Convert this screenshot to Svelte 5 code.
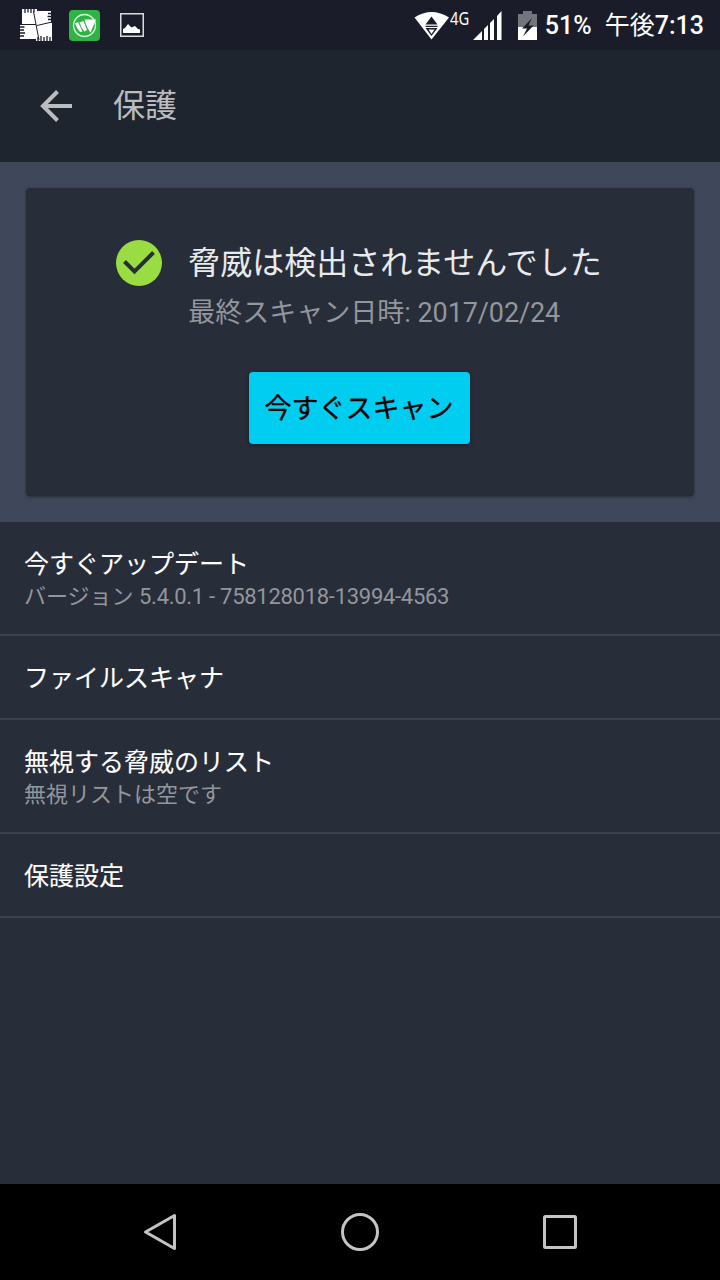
<script>
  const items = [
    { title: '今すぐアップデート', sub: 'バージョン', version: '5.4.0.1 - 758128018-13994-4563' },
    { title: 'ファイルスキャナ' },
    { title: '無視する脅威のリスト', sub: '無視リストは空です' },
    { title: '保護設定' }
  ];
</script>

<div class="screen" lang="ja">
  <div class="statusbar">
    <div class="notifications">
      <svg width="32" height="32" viewBox="0 0 32 32">
        <path fill="#fff" d="M2 0h15v2h14v12h1v18H16v-2H0V15h2z" />
        <path fill="none" stroke="#1a1d29" stroke-width="1.300" d="M5 0v4M8 0v3.500M11 0v4M14 0v3.500M31.500 4.500H28M31.500 7.500h-4M31.500 10.500H28M0 18h4.500M0 21h4M0 24h5M0 27h4M18 32v-4M21 32v-5M24 32v-4M27 32v-5M30 32v-4" />
        <path fill="none" stroke="#1a1d29" d="M13.500 2.500L19 31M0 15.500h16M17 16.500l15-3.500" />
      </svg>
      <svg width="31" height="31" viewBox="0 0 31 31">
        <rect width="31" height="31" rx="4" fill="#2eb344" />
        <circle cx="15.500" cy="15.500" r="11" fill="none" stroke="#d8f1db" stroke-width="1.300" />
        <path fill="#fff" d="M6 13.500l3-1.500 4.500 9.500-2.500.5q-3-3-5-8.500zM10.500 12.500l4-1.500 3.500 9-2.500 1.500q-3-3-5-9zM15.500 9.500H27l-5.500 13q-4-5-6-13z" />
      </svg>
      <svg width="24" height="24" viewBox="0 0 24 24">
        <rect x=".75" y=".75" width="22.500" height="22.500" fill="none" stroke="#d8dcdc" stroke-width="1.500" />
        <path fill="#fff" d="M3 20v-4l2-1 3-4 3.500 3.500L15 13l3 3 2 .5V20z" />
      </svg>
    </div>
    <div class="system">
      <svg width="36" height="29" viewBox="0 0 36 29">
        <path fill="#fff" d="M.5 6.500Q17.500-4.500 35 6.500L17.500 28.500z" />
        <path fill="#1a1d29" d="M17.500 5.500l6 8h-12zM11.500 14.700h12v1.200h-12zM11.500 17h12l-6 8z" />
        <path fill="#fff" d="M14.500 18.500h6l-3 4.500z" />
      </svg>
      <span class="net">4G</span>
      <svg width="29" height="29" viewBox="0 0 29 29">
        <path fill="#fff" d="M0 29l9-9v9zM11 29V18l4-4v15zM17 29V12l4-4v21zM24 29V5l4.500-5v29z" />
      </svg>
      <svg class="battery" width="19" height="29" viewBox="0 0 19 29">
        <path fill="#73767c" d="M5 0h9v3h5v13H0V3h5z" />
        <path fill="#fff" d="M0 16h19v13H0z" />
        <path fill="#1a1d29" d="M14 7L4 17.500h5L5 25.500l10.500-11h-5z" />
      </svg>
      <span class="pct">51%</span>
      <span class="clock"><span class="ampm">午後</span>7:13</span>
    </div>
  </div>

  <header>
    <svg width="32" height="32" viewBox="0 0 32 32">
      <path fill="none" stroke="#bbbcbf" stroke-width="4" d="M32 16H4M17.500 1.500L3 16l14.500 14.500" />
    </svg>
    <h1>保護</h1>
  </header>

  <section class="hero">
    <div class="card">
      <div class="result">
        <svg width="46" height="46" viewBox="0 0 46 46">
          <circle cx="23" cy="23" r="23" fill="#9add43" />
          <path fill="none" stroke="#282d3a" stroke-width="4" d="M8.500 21.500L18.500 31.500L37.500 12.500" />
        </svg>
        <div>
          <h2>脅威は検出されませんでした</h2>
          <p>最終スキャン日時: <span class="date">2017/02/24</span></p>
        </div>
      </div>
      <button>今すぐスキャン</button>
    </div>
  </section>

  <ul>
    {#each items as item}
      <li class:double={item.sub}>
        <div class="title">{item.title}</div>
        {#if item.sub}
          <div class="sub">{item.sub} <span class="version">{item.version ?? ''}</span></div>
        {/if}
      </li>
    {/each}
  </ul>

  <nav>
    <svg width="40" height="40" viewBox="0 0 40 40">
      <path d="M34.500 3.500v33L5.500 20z" />
    </svg>
    <svg width="40" height="40" viewBox="0 0 40 40">
      <circle cx="20" cy="20" r="17.500" />
    </svg>
    <svg width="40" height="40" viewBox="0 0 40 40">
      <rect x="4.500" y="4.500" width="31" height="31" rx="1" />
    </svg>
  </nav>
</div>

<style>
  :global(body) {
    margin: 0;
    background: #282d3a;
  }
  .screen {
    width: 720px;
    height: 1280px;
    display: flex;
    flex-direction: column;
    background: #282d3a;
    font-family: Roboto, "Noto Sans CJK JP", sans-serif;
    overflow: hidden;
  }
  svg {
    display: block;
    flex-shrink: 0;
  }
  h1, h2, p, ul {
    margin: 0;
    padding: 0;
    font-weight: 400;
    white-space: nowrap;
  }
  .statusbar {
    height: 50px;
    box-sizing: border-box;
    padding: 0 16px 0 20px;
    display: flex;
    justify-content: space-between;
    align-items: center;
    background: #1a1d29;
    color: #fff;
  }
  .notifications {
    display: flex;
    align-items: center;
    gap: 17px;
  }
  .notifications svg:last-child {
    margin-left: 3px;
  }
  .system {
    display: flex;
    align-items: center;
    height: 50px;
    line-height: 50px;
    white-space: nowrap;
  }
  .net {
    width: 23px;
    font-family: "Noto Sans", sans-serif;
    font-size: 18px;
    line-height: 20px;
    margin-bottom: 14px;
    transform: scaleX(0.82);
    transform-origin: left;
  }
  .battery {
    margin: 0 8px 0 16px;
  }
  .pct {
    width: 60px;
    padding-top: 2px;
    font-size: 25px;
    font-weight: 500;
  }
  .clock {
    padding-top: 2px;
    font-size: 25px;
    font-weight: 500;
  }
  .ampm {
    font-weight: 400;
  }
  header {
    height: 112px;
    box-sizing: border-box;
    padding-left: 40px;
    display: flex;
    align-items: center;
    gap: 41px;
    background: #1f252f;
  }
  h1 {
    font-size: 32px;
    line-height: 48px;
    color: #bbbcbf;
  }
  .hero {
    height: 360px;
    box-sizing: border-box;
    padding: 26px;
    background: #3f475a;
  }
  .card {
    height: 308px;
    box-sizing: border-box;
    padding: 50px 2px 0 0;
    display: flex;
    flex-direction: column;
    align-items: center;
    background: #282d3a;
    border-radius: 4px;
    box-shadow: 0 1px 3px rgba(0, 0, 0, 0.4);
  }
  .result {
    height: 134px;
    display: flex;
    gap: 26px;
  }
  .result svg {
    margin-top: 2px;
  }
  h2 {
    padding-top: 1px;
    font-size: 32px;
    line-height: 48px;
    color: #e9eaeb;
  }
  p {
    font-size: 27px;
    line-height: 52px;
    color: #93969c;
  }
  .date {
    letter-spacing: -0.1px;
  }
  button {
    width: 221px;
    height: 72px;
    padding: 2px 0 0;
    border: none;
    border-radius: 4px;
    background: #00cdf0;
    color: #000;
    font: 400 27px/70px Roboto, "Noto Sans CJK JP", sans-serif;
    -webkit-text-stroke: 0.3px;
    box-shadow: 0 1px 4px rgba(0, 0, 0, 0.4);
  }
  ul {
    flex: 1;
    list-style: none;
  }
  li {
    height: 84px;
    box-sizing: border-box;
    padding: 25px 24px 0;
    border-bottom: 2px solid #3c4050;
  }
  li.double {
    height: 114px;
  }
  .title {
    font-size: 25px;
    line-height: 36px;
    color: #fff;
    -webkit-text-stroke: 0.1px;
  }
  .sub {
    font-size: 22px;
    line-height: 28px;
    color: #93969c;
  }
  .version {
    letter-spacing: -0.28px;
  }
  nav {
    height: 96px;
    display: flex;
    justify-content: center;
    align-items: center;
    gap: 160px;
    background: #000;
  }
  nav svg {
    fill: none;
    stroke: #c4c4c4;
    stroke-width: 3;
    stroke-linejoin: round;
  }
</style>
